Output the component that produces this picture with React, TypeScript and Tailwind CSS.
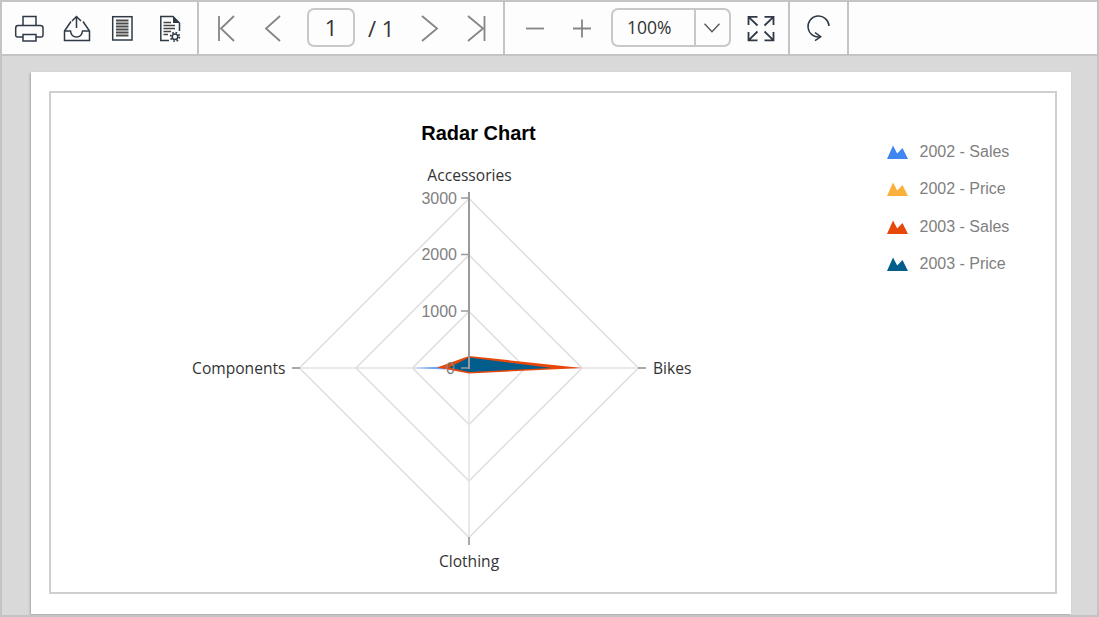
const ink = "#2f3a46"
const gray = "#858585"

function Print() {
  return (
    <svg viewBox="13 12 32 32" className="w-8 h-8" fill="none" stroke={ink} strokeWidth="1.5">
      <path d="M23 26V16.5H36V26" />
      <path d="M23 37H17.5a1.8 1.8 0 0 1-1.8-1.8V28a2.5 2.5 0 0 1 2.5-2.5H40.5a2.5 2.5 0 0 1 2.5 2.5v7.2a1.8 1.8 0 0 1-1.8 1.8H36" />
      <rect x="23" y="34.5" width="13" height="6.5" />
    </svg>
  )
}

function Export() {
  return (
    <svg viewBox="59 12 32 32" className="w-8 h-8" fill="none" stroke={ink} strokeWidth="1.5">
      <path d="M75.5 28V16.5M71 21l4.500-4.500L80 21" />
      <path d="M70 21.500L63.500 31V40.500H88.500V31L82 21.500" />
      <path d="M63.500 31H69.500C70 35 72 37 75.500 37S81 35 81.500 31H88.500" />
    </svg>
  )
}

function Page() {
  return (
    <svg viewBox="106 12 32 32" className="w-8 h-8" fill="none">
      <rect x="112.700" y="16.700" width="19.300" height="23.300" stroke={ink} strokeWidth="1.500" />
      <path d="M116 20.500H128.500M116 23.500H128.500M116 26.500H128.500M116 29.500H128.500M116 32.500H128.500M116 35.500H128.500" stroke="#4a4a4a" strokeWidth="1.800" />
    </svg>
  )
}

function PageSetup() {
  return (
    <svg viewBox="152 12 32 32" className="w-8 h-8" fill="none">
      <path d="M168 40.500H159.800V16.500H172L178.500 23V31" stroke={ink} strokeWidth="1.500" />
      <path d="M172 16.500L178.500 23H172Z" fill={ink} />
      <path d="M162.500 22.500H170M162.500 25.500H174M162.500 28.500H174M162.500 31.500H170M162.500 34.500H167" stroke="#444" strokeWidth="1.300" />
      <circle cx="174" cy="36.800" r="2.800" stroke={ink} strokeWidth="1.500" />
      <circle cx="174" cy="36.800" r="4.300" stroke={ink} strokeWidth="1.800" strokeDasharray="1.600 1.780" />
    </svg>
  )
}

function Nav({ box, d }: { box: string; d: string }) {
  return (
    <svg viewBox={box} className="w-8 h-8" fill="none" stroke={gray} strokeWidth="1.800">
      <path d={d} />
    </svg>
  )
}

function Fit() {
  return (
    <svg viewBox="745 12 32 32" className="w-8 h-8" fill="none" stroke={ink} strokeWidth="1.800">
      <path d="M748.500 25V16.800H757.500M749 17.300L757.500 25.500" />
      <path d="M764.500 16.800H773.500V25M773 17.300L764.500 25.500" />
      <path d="M748.500 32V40.300H757.500M749 39.800L757.500 31.500" />
      <path d="M764.500 40.300H773.500V32M773 39.800L764.500 31.500" />
    </svg>
  )
}

function Refresh() {
  return (
    <svg viewBox="803 12 32 32" className="w-8 h-8" fill="none" stroke={ink} strokeWidth="1.500">
      <path d="M829 26A10.500 10.500 0 1 0 820.500 36.800" />
      <path d="M815 32.500L820.700 36.800L815 40.700" />
    </svg>
  )
}

function Mountains({ color }: { color: string }) {
  return (
    <svg viewBox="0 0 21 14" className="w-[21px] h-[14px] shrink-0" fill={color}>
      <path d="M0 14L6 0.500L10.200 8.500L15.500 3L21 14Z" />
    </svg>
  )
}

function Radar() {
  const rings = [56.5, 113, 169.5]
  const ticks = [
    { label: "3000", y: 198, end: 457 },
    { label: "2000", y: 254.500, end: 457 },
    { label: "1000", y: 311, end: 457 },
    { label: "0", y: 368, end: 455 },
  ]
  return (
    <svg viewBox="51 93 800 498" className="w-[800px] h-[498px] shrink-0" fontFamily="'Open Sans', sans-serif">
      <text x="478.500" y="140" textAnchor="middle" fontFamily="'Liberation Sans', sans-serif" fontWeight="700" fontSize="20" fill="#000">
        Radar Chart
      </text>

      {rings.map((r) => (
        <polygon
          key={r}
          points={`469,${368 - r} ${469 + r},368 469,${368 + r} ${469 - r},368`}
          fill="none"
          stroke="#dedede"
          strokeWidth="1.500"
        />
      ))}
      <path d="M300 368H638M469 368V537" stroke="#e2e2e2" strokeWidth="1.500" />
      <path d="M292 368H300M638 368H646M469 537V545" stroke="#8c8c8c" strokeWidth="1.500" />

      <polygon points="413,368 445,366.500 445,369.500" fill="#6fa3f5" />
      <polygon points="437,367.500 469,356 582,368 469,373.500" fill="#e8470a" />
      <polygon points="449,367.500 469,357.500 552,368 469,372" fill="#005d8c" />

      <path d="M469 192V369" stroke="#9a9a9a" strokeWidth="2" />
      {ticks.map((t) => (
        <g key={t.label}>
          <path d={`M461 ${t.y}H469`} stroke="#9a9a9a" strokeWidth="1.500" />
          <text x={t.end} y={t.y + 5.500} textAnchor="end" fontFamily="'Liberation Sans', sans-serif" fontSize="16" fill="#7f7f7f">
            {t.label}
          </text>
        </g>
      ))}

      <g fontSize="15.600" fill="#333">
        <text x="469.500" y="180.500" textAnchor="middle">Accessories</text>
        <text x="285.500" y="373.500" textAnchor="end">Components</text>
        <text x="653" y="373.500">Bikes</text>
        <text x="469" y="566.500" textAnchor="middle">Clothing</text>
      </g>
    </svg>
  )
}

export default function App() {
  const legend = [
    { label: "2002 - Sales", color: "#3f86f0" },
    { label: "2002 - Price", color: "#fbb03b" },
    { label: "2003 - Sales", color: "#e8470a" },
    { label: "2003 - Price", color: "#005d8c" },
  ]

  return (
    <div className="w-[1099px] h-[617px] overflow-hidden flex flex-col border-2 border-[#c4c4c4] bg-[#d9d9d9] font-['Open_Sans',sans-serif]">
      {/* Toolbar */}
      <div className="h-[54px] shrink-0 flex bg-[#fdfdfd] border-b-2 border-[#c4c4c4]">
        <div className="w-[197px] shrink-0 flex items-center pl-[11px] gap-[14.500px] border-r-2 border-[#c4c4c4]">
          <Print />
          <Export />
          <Page />
          <PageSetup />
        </div>

        <div className="w-[306px] shrink-0 flex items-center pl-[12px] border-r-2 border-[#c4c4c4]">
          <Nav box="212 12 32 32" d="M220 16V41M235 16L222 28.500L235 41" />
          <div className="ml-[14px]">
            <Nav box="258 12 32 32" d="M281 16L267 28.500L281 41" />
          </div>
          <div className="ml-[18px] mt-[-1px] w-[48px] h-[39px] flex items-center justify-center border-2 border-[#c8c8c8] rounded-[7px] text-[22px] text-[#333]">
            1
          </div>
          <span className="ml-[13px] w-[47px] text-[22px] text-[#333] whitespace-nowrap">/ 1</span>
          <div className="ml-[-1px]">
            <Nav box="414 12 32 32" d="M422 16L437 28.500L422 41" />
          </div>
          <div className="ml-[14px]">
            <Nav box="460 12 32 32" d="M468 16L483 28.500L468 41M484.500 16V41" />
          </div>
        </div>

        <div className="w-[285px] shrink-0 flex items-center pl-[14px] border-r-2 border-[#c4c4c4]">
          <Nav box="519 12 32 32" d="M526 28.500H544" />
          <div className="ml-[15px]">
            <Nav box="566 12 32 32" d="M573 28.500H591M582 19.500V37.500" />
          </div>
          <div className="ml-[13px] mt-[-1px] w-[120px] h-[39px] flex items-center border-2 border-[#c8c8c8] rounded-[7px] text-[17.500px] text-[#333]">
            <span className="w-[82px] pr-[8px] text-center">100%</span>
            <div className="w-[36px] h-full flex items-center justify-center border-l-2 border-[#c8c8c8]">
              <svg viewBox="0 0 16 10" className="w-4 h-[10px]" fill="none" stroke="#555" strokeWidth="1.300">
                <path d="M0.500 0.800L8 8.800L15.500 0.800" />
              </svg>
            </div>
          </div>
          <div className="ml-[14px]">
            <Fit />
          </div>
        </div>

        <div className="w-[59px] shrink-0 flex items-center justify-center border-r-2 border-[#c4c4c4]">
          <Refresh />
        </div>
      </div>

      {/* Report page */}
      <div className="flex-1 pt-[16px] pl-[29px]">
        <div className="w-[1040px] h-[542px] pt-[19px] pl-[18px] bg-white shadow-[-1px_1px_2px_rgba(0,0,0,0.25)]">
          <div className="w-[1008px] h-[503px] flex border-2 border-[#cfcfcf]">
            <Radar />
            <div className="pl-[36px] pt-[47.500px] flex flex-col gap-[15.500px]">
              {legend.map((item) => (
                <div key={item.label} className="h-[22px] flex items-center gap-[11.500px] font-['Liberation_Sans',sans-serif] text-[16px] text-[#7f7f7f] whitespace-nowrap">
                  <Mountains color={item.color} />
                  {item.label}
                </div>
              ))}
            </div>
          </div>
        </div>
      </div>
    </div>
  )
}
